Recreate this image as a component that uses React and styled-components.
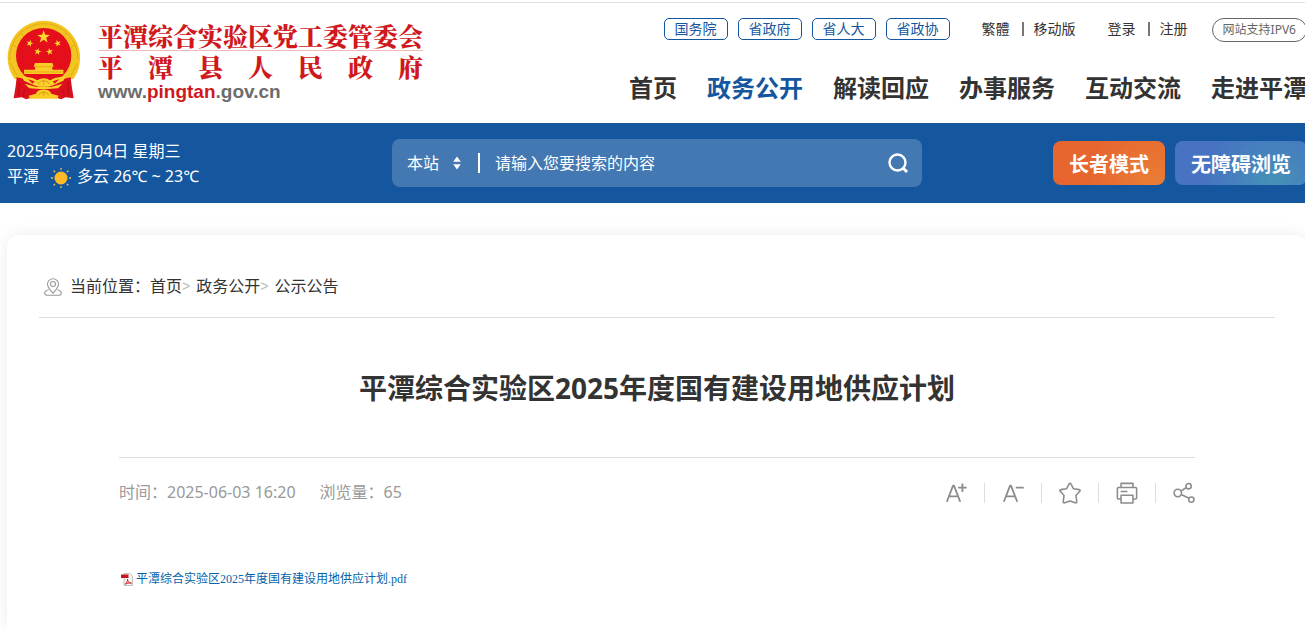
import React, { useState } from "react";
import styled, { createGlobalStyle } from "styled-components";

const govLinks = ["国务院", "省政府", "省人大", "省政协"];
const navItems = ["首页", "政务公开", "解读回应", "办事服务", "互动交流", "走进平潭"];

const star = (cx, cy, r, turn = 0) => {
  const pts = [];
  for (let i = 0; i < 10; i++) {
    const a = -Math.PI / 2 + turn + (i * Math.PI) / 5;
    const d = i % 2 ? r * 0.4 : r;
    pts.push(`${(cx + d * Math.cos(a)).toFixed(1)},${(cy + d * Math.sin(a)).toFixed(1)}`);
  }
  return pts.join(" ");
};

const Emblem = () => (
  <svg width="74" height="80" viewBox="21 31 222 240" aria-hidden="true">
    <path
      d="M131 33C190 33 240 82 240 144c0 24-7 46-20 64H44C31 190 23 168 23 144 23 82 72 33 131 33z"
      fill="#f4c420"
    />
    <path
      d="M29 151c0-60 43-109 102-109s103 49 103 109M31 160l20 37M233 160l-20 37M38 105l17 12M225 105l-17 12M62 69l13 14M200 69l-13 14"
      fill="none"
      stroke="#dda31a"
      strokeWidth="2.500"
    />
    <circle cx="131" cy="138" r="83" fill="#e50f1b" />
    <polygon points={star(131, 82, 20)} fill="#fbd62c" />
    <polygon points={star(89, 101, 11, 0.3)} fill="#fbd62c" />
    <polygon points={star(173, 101, 11, -0.3)} fill="#fbd62c" />
    <polygon points={star(113, 126, 11, 0.2)} fill="#fbd62c" />
    <polygon points={star(149, 126, 11, -0.2)} fill="#fbd62c" />
    <path d="M105 160h52l4 11h-4v9h33v13H72v-13h33v-9h-4z" fill="#fbcb26" />
    <path d="M72 187h118M103 171h56" stroke="#dc9b18" strokeWidth="2" />
    <path
      d="M50 203l24 5h114l24-5 3 26 6 37-25-3-12 6-20-6h-66l-20 6-12-6-25 3 6-37z"
      fill="#dc0f1c"
    />
    <path
      d="M64 199l34 6 14 7c10-8 28-8 38 0l14-7 34-6-8 14-30 14-16 4h-26l-16-4-30-14z"
      fill="#fbd02a"
    />
    <path d="M84 209l20 6-6 7zM178 209l-20 6 6 7z" fill="#e2141d" />
    <path d="M74 222l32 9h50l32-9-14 14-30 2h-26l-30-2z" fill="#fbd02a" />
    <path d="M86 258l22-6c3-17 43-17 46 0l22 6-4 9h-82z" fill="#f9cb24" />
    <path d="M115 223c3-13 29-13 32 0M117 256c3-11 25-11 28 0M131 211v14M131 246v12" fill="none" stroke="#dd9d18" strokeWidth="3" />
    <path d="M58 216l-2 42M204 216l2 42M74 240l-6 22M188 240l6 22" stroke="#b40c18" strokeWidth="3" />
  </svg>
);

const Sun = () => (
  <svg width="20" height="20" viewBox="0 0 20 20" aria-hidden="true">
    <circle cx="10" cy="10" r="6.5" fill="#fdb926" />
    <path
      d="M10 0v1.8M10 18.2V20M0 10h1.8M18.2 10H20M2.6 2.6l1.5 1.5M15.9 15.9l1.5 1.5M2.6 17.4l1.5-1.5M15.9 4.1l1.5-1.5"
      stroke="#fdc84a"
      strokeWidth="1.3"
    />
  </svg>
);

const Icon = ({ children }) => (
  <svg
    width="22"
    height="22"
    viewBox="0 0 24 24"
    fill="none"
    stroke="#8c8c8c"
    strokeWidth="1.7"
    strokeLinejoin="round"
    aria-hidden="true"
  >
    {children}
  </svg>
);

const tools = [
  {
    label: "放大字体",
    icon: <path d="M2 21.500L8.800 4h1L16.600 21.500M4.400 15.600h9.800M19 1.500v9.500M14.300 6.200h9.400" strokeWidth="2" />,
  },
  {
    label: "缩小字体",
    icon: <path d="M2 21.500L8.800 4h1L16.600 21.500M4.400 15.600h9.800M15 6.200h8.700" strokeWidth="2" />,
  },
  {
    label: "收藏",
    icon: (
      <path d="M12 1.500c.5 0 .8.3 1.100.8l2.600 5 6.200 1c1.200.2 1.500 1.100.7 1.900l-4.100 4.500.9 6.800c.1 1-.6 1.500-1.500 1.100L12 20.700l-5.900 1.900c-.9.4-1.600-.1-1.500-1.100l.9-6.800L1.400 10.200c-.8-.8-.5-1.700.7-1.900l6.200-1 2.600-5c.3-.5.6-.8 1.100-.8z" />
    ),
  },
  {
    label: "打印",
    icon: (
      <>
        <path d="M5.500 6V1.500h13V6M5.500 18.500h-3c-.7 0-1-.3-1-1V7c0-.7.3-1 1-1h19c.7 0 1 .3 1 1v10.500c0 .7-.3 1-1 1h-3" />
        <path d="M5.500 14.500h13v8.500h-13zM5 10.300h7.500" />
      </>
    ),
  },
  {
    label: "分享",
    icon: (
      <>
        <circle cx="5.200" cy="12" r="4" />
        <circle cx="17" cy="4.600" r="2.900" />
        <circle cx="20" cy="19.200" r="2.900" />
        <path d="M8.600 9.800l5.900-3.600M9 13.700l8.400 4.100" />
      </>
    ),
  },
];

const App = () => {
  const [scope, setScope] = useState("site");
  const [keyword, setKeyword] = useState("");

  return (
    <Page>
      <GlobalStyle />
      <Header>
        <HeaderInner>
          <Logo href="#">
            <Emblem />
            <LogoText>
              <LogoLine>平潭综合实验区党工委管委会</LogoLine>
              <LogoLine $second>平 潭 县 人 民 政 府</LogoLine>
              <LogoUrl>
                www.<b>pingtan</b>.gov.cn
              </LogoUrl>
            </LogoText>
          </Logo>
          <HeaderRight>
            <TopLinks>
              <GovLinks>
                {govLinks.map((name) => (
                  <GovLink href="#" key={name}>
                    {name}
                  </GovLink>
                ))}
              </GovLinks>
              <LinkPair>
                <a href="#">繁體</a>
                <a href="#">移动版</a>
              </LinkPair>
              <LinkPair>
                <a href="#">登录</a>
                <a href="#">注册</a>
              </LinkPair>
              <Ipv6>网站支持IPV6</Ipv6>
            </TopLinks>
            <Nav>
              {navItems.map((name) => (
                <NavLink href="#" key={name} $active={name === "政务公开"}>
                  {name}
                </NavLink>
              ))}
            </Nav>
          </HeaderRight>
        </HeaderInner>
      </Header>

      <Banner>
        <BannerInner>
          <Weather>
            <div>2025年06月04日 星期三</div>
            <WeatherRow>
              平潭
              <Sun />
              <span>多云 26℃ ~ 23℃</span>
            </WeatherRow>
          </Weather>
          <Search onSubmit={(ev) => ev.preventDefault()}>
            <Scope>
              <ScopeSelect
                aria-label="搜索范围"
                value={scope}
                onChange={(ev) => setScope(ev.target.value)}
              >
                <option value="site">本站</option>
              </ScopeSelect>
              <svg width="10" height="14" viewBox="0 0 10 14" fill="#fff" aria-hidden="true">
                <path d="M5 .5l3.800 5.300H1.200zM5 13.500l3.800-5.300H1.200z" />
              </svg>
            </Scope>
            <SearchInput
              type="text"
              aria-label="搜索"
              placeholder="请输入您要搜索的内容"
              value={keyword}
              onChange={(ev) => setKeyword(ev.target.value)}
            />
            <SearchButton type="submit" aria-label="搜索">
              <svg width="22" height="22" viewBox="0 0 22 22" fill="none" stroke="#fff" strokeWidth="2.4">
                <circle cx="10.500" cy="10.500" r="8" />
                <path d="M16 16l4 4" strokeWidth="3" />
              </svg>
            </SearchButton>
          </Search>
          <Modes>
            <ModeButton type="button">长者模式</ModeButton>
            <ModeButton type="button" $blue>
              无障碍浏览
            </ModeButton>
          </Modes>
        </BannerInner>
      </Banner>

      <Card>
        <Breadcrumb>
          <svg
            width="18"
            height="18"
            viewBox="0 0 18 18"
            fill="none"
            stroke="#999"
            strokeWidth="1.1"
            aria-hidden="true"
          >
            <path d="M9 15.200C6.500 12.200 3.500 9.300 3.500 6.200a5.500 5.500 0 0 1 11 0c0 3.100-3 6-5.500 9z" />
            <circle cx="9" cy="6" r="2.500" />
            <path d="M4.600 11.800C2.200 12.500.7 13.600.7 14.900c0 1.700 1.600 2.400 3.300 2.400h10c1.700 0 3.300-.7 3.300-2.400 0-1.300-1.500-2.400-3.900-3.100" />
          </svg>
          <Crumbs>
            当前位置：<a href="#">首页</a>
            <Arrow>&gt;</Arrow>
            <a href="#">政务公开</a>
            <Arrow>&gt;</Arrow>
            <a href="#">公示公告</a>
          </Crumbs>
        </Breadcrumb>
        <Article>
          <Title>平潭综合实验区2025年度国有建设用地供应计划</Title>
          <Meta>
            <MetaText>
              <span>时间：2025-06-03 16:20</span>
              <span>浏览量：65</span>
            </MetaText>
            <Tools>
              {tools.map((tool) => (
                <Tool type="button" key={tool.label} aria-label={tool.label}>
                  <Icon>{tool.icon}</Icon>
                </Tool>
              ))}
            </Tools>
          </Meta>
          <FileLink href="#">
            <svg width="12" height="13" viewBox="0 0 12 13" aria-hidden="true">
              <path d="M3 .5h6l2.500 2.500v9.500H3z" fill="#f6f3f3" stroke="#b9b2b2" strokeWidth=".8" />
              <path d="M0 1.500h7.500v3.500H0z" fill="#c3151c" />
              <path
                d="M4 11.300c2-1.200 2.700-3.300 2.500-5.300 0 2.500 1.500 4 4 4.200-2.500-.4-4.500 0-6.500 1.100z"
                fill="none"
                stroke="#d0282e"
                strokeWidth="1"
              />
            </svg>
            平潭综合实验区2025年度国有建设用地供应计划.pdf
          </FileLink>
        </Article>
      </Card>
    </Page>
  );
};

export default App;

const GlobalStyle = createGlobalStyle`
  * {
    box-sizing: border-box;
  }
  body {
    margin: 0;
    background: #fff;
    color: #333;
    font-family: "Noto Sans", "Noto Sans CJK SC", sans-serif;
    font-size: 16px;
  }
  a {
    color: inherit;
    text-decoration: none;
  }
  button, input, select {
    font: inherit;
    color: inherit;
    border: none;
    background: none;
    padding: 0;
    outline: none;
  }
  button {
    cursor: pointer;
  }
  svg {
    display: block;
    flex: none;
  }
`;
const Page = styled.div`
  display: flex;
  flex-direction: column;
  min-height: 100vh;
  padding-top: 2px;
  overflow: hidden;
`;
const Header = styled.header`
  border-top: 1px solid #dfe1e5;
`;
const HeaderInner = styled.div`
  display: flex;
  justify-content: space-between;
  height: 120px;
  margin: 0 -2px 0 7px;
`;
const Logo = styled.a`
  display: flex;
  flex: none;
  gap: 17px;
  padding-top: 17px;
`;
const LogoText = styled.div`
  color: #d0191c;
`;
const LogoLine = styled.div`
  font-family: "Noto Serif CJK SC", "Noto Sans CJK SC", serif;
  font-size: 25px;
  font-weight: 900;
  line-height: 30px;
  text-align-last: justify;
  border-bottom: ${(props) => (props.$second ? "none" : "1px solid #efb9b5")};
`;
const LogoUrl = styled.div`
  font-family: "Liberation Sans", Arial, sans-serif;
  font-size: 19px;
  font-weight: 700;
  line-height: 22px;
  color: #6c6c6c;
  b {
    color: #d0191c;
  }
`;
const HeaderRight = styled.div`
  display: flex;
  flex-direction: column;
  align-items: flex-end;
  flex: none;
  gap: 26px;
  padding-top: 15px;
`;
const TopLinks = styled.div`
  display: flex;
  align-items: flex-start;
  font-size: 14px;
  line-height: 20px;
`;
const GovLinks = styled.div`
  display: flex;
  gap: 10px;
  margin-right: 32px;
`;
const GovLink = styled.a`
  padding: 0 10px;
  border: 1px solid #15579f;
  border-radius: 5px;
  color: #15579f;
`;
const LinkPair = styled.div`
  display: flex;
  align-items: center;
  height: 22px;
  margin-right: 32px;
  a + a {
    display: flex;
    align-items: center;
  }
  a + a::before {
    content: "";
    width: 2px;
    height: 14px;
    margin: 0 10px 0 12px;
    background: #777;
  }
  & + & {
    margin-right: 24px;
  }
`;
const Ipv6 = styled.span`
  padding: 0 10px;
  border: 1px solid #666;
  border-radius: 12px;
  color: #666;
  font-size: 12px;
  line-height: 22px;
`;
const Nav = styled.nav`
  display: flex;
  gap: 30px;
`;
const NavLink = styled.a`
  font-size: 24px;
  font-weight: 700;
  line-height: 40px;
  color: ${(props) => (props.$active ? "#15579f" : "#333")};
`;
const Banner = styled.div`
  background: #15579f;
  color: #fff;
`;
const BannerInner = styled.div`
  display: flex;
  align-items: center;
  height: 80px;
  margin: 0 -2px 0 7px;
`;
const Weather = styled.div`
  flex: none;
  width: 385px;
  padding-top: 2px;
  line-height: 25px;
`;
const WeatherRow = styled.div`
  display: flex;
  align-items: center;
  svg {
    margin: 2px 6px 0 12px;
  }
`;
const Search = styled.form`
  display: flex;
  align-items: center;
  width: 530px;
  height: 48px;
  padding: 0 13px 0 15px;
  border-radius: 8px;
  background: rgba(255, 255, 255, 0.2);
`;
const Scope = styled.div`
  display: flex;
  align-items: center;
  gap: 12px;
  padding-right: 16px;
  border-right: 2px solid #fff;
  height: 20px;
`;
const ScopeSelect = styled.select`
  appearance: none;
  width: 33px;
`;
const SearchInput = styled.input`
  flex: 1;
  min-width: 0;
  padding-left: 15px;
  &::placeholder {
    color: #fff;
    opacity: 1;
  }
`;
const SearchButton = styled.button`
  flex: none;
`;
const Modes = styled.div`
  display: flex;
  gap: 10px;
  margin-left: auto;
`;
const ModeButton = styled.button`
  height: 44px;
  padding: 0 16px;
  border-radius: 8px;
  color: #fff;
  font-size: 20px;
  font-weight: 700;
  white-space: nowrap;
  background: ${(props) =>
    props.$blue
      ? "radial-gradient(circle at 75% 100%, #4592b8, #4773c2 65%)"
      : "radial-gradient(circle at 90% 100%, #e97e35, #e7662f 60%)"};
`;
const Card = styled.main`
  flex: 1;
  margin: 32px -2px 0 7px;
  padding: 0 32px;
  border-radius: 12px 12px 0 0;
  background: #fff;
  box-shadow: 0 0 16px rgba(0, 0, 0, 0.08);
`;
const Breadcrumb = styled.div`
  display: flex;
  align-items: center;
  gap: 8px;
  height: 83px;
  padding: 22px 0 0 5px;
  border-bottom: 1px solid #ddd;
`;
const Crumbs = styled.div`
  display: flex;
  align-items: center;
  padding-bottom: 2px;
  line-height: 24px;
`;
const Arrow = styled.span`
  margin-right: 6px;
  color: #bbb;
  font-family: "Liberation Sans", Arial, sans-serif;
  font-size: 14px;
`;
const Article = styled.article`
  padding: 0 80px;
`;
const Title = styled.h1`
  margin: 0;
  padding: 50px 0 49px;
  font-size: 28px;
  font-weight: 700;
  line-height: 40px;
  text-align: center;
`;
const Meta = styled.div`
  display: flex;
  align-items: center;
  justify-content: space-between;
  height: 70px;
  border-top: 1px solid #ddd;
  color: #999;
`;
const MetaText = styled.div`
  display: flex;
  gap: 24px;
  padding-bottom: 3px;
`;
const Tools = styled.div`
  display: flex;
  align-items: center;
`;
const Tool = styled.button`
  display: flex;
  align-items: center;
  height: 20px;
  & + & {
    margin-left: 17px;
    padding-left: 17px;
    border-left: 1px solid #ddd;
  }
`;
const FileLink = styled.a`
  display: flex;
  align-items: center;
  gap: 3px;
  margin-top: 42px;
  padding-left: 2px;
  color: #0563ab;
  font-family: "Liberation Serif", "Noto Sans CJK SC", serif;
  font-size: 12px;
  line-height: 20px;
`;
